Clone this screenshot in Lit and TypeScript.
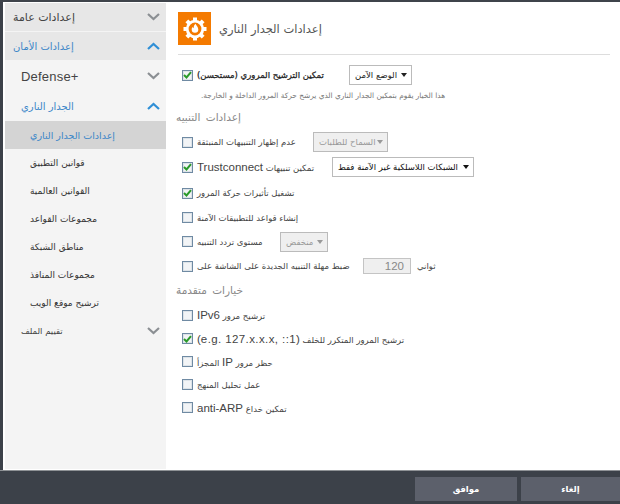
import { LitElement, html, svg, css } from "lit";
import { customElement } from "lit/decorators.js";

const check = (on: boolean) => html`<span class="cb">${on ? html`<svg width="9" height="8" viewBox="0 0 9 8"><path d="M1 4l2.5 2.5L8 1.2" fill="none" stroke="#2a9a2a" stroke-width="2"/></svg>` : ""}</span>`;
const chev = (up: boolean) => html`<svg class="chev" width="13" height="8" viewBox="0 0 13 8"><path d=${up ? "M1 7l5.500-5 5.500 5" : "M1 1l5.500 5 5.500-5"} fill="none" stroke=${up ? "#2f8fd6" : "#8b8f93"} stroke-width="2.2"/></svg>`;
const teeth = [0, 45, 90, 135, 180, 225, 270, 315];

@customElement("app-root")
export class AppRoot extends LitElement {
  static styles = css`
    :host { display: block; width: 620px; height: 504px; font-family: "DejaVu Sans", sans-serif; font-size: 10px; color: #444; background: #fff; overflow: hidden; }
    .frame { height: 504px; display: flex; flex-direction: column; }
    .top { height: 2px; background: #3f444b; flex: none; }
    .main { flex: 1; display: flex; min-height: 0; border-bottom: 1px solid #8f9296; }
    .lb { width: 3px; background: #3c4149; flex: none; margin-right: 2px; }
    .side { width: 161px; background: #f4f4f4; flex: none; display: flex; flex-direction: column; margin: 1px 0; }
    .n { height: 28px; flex: none; display: flex; align-items: center; justify-content: space-between; padding-right: 6px; box-sizing: border-box; }
    .l1 { background: #e7e7e7; padding-left: 8px; margin-bottom: 1px; }
    .l2 { padding-left: 16px; height: 30px; }
    .l3 { padding-left: 25px; font-size: 9px; color: #333; }
    .big { font-size: 11px; color: #444; }
    .small { font-size: 8.5px; height: 28px; }
    .blue { color: #3b86c8; }
    .sel { background: #d4d4d4; font-size: 9.5px; color: #3b86c8; }
    .en { font-family: "Liberation Sans", sans-serif; font-size: 13px; letter-spacing: .2px; }
    .body { flex: 1; padding: 10px 10px 0 10px; min-width: 0; }
    .head { display: flex; align-items: center; gap: 8px; height: 43px; border-bottom: 1px solid #ddd; margin-left: 2px; padding-bottom: 9px; box-sizing: border-box; }
    .logo { width: 33px; height: 33px; background: #f47a00; display: flex; align-items: center; justify-content: center; flex: none; }
    .title { font-size: 11.5px; color: #555; }
    .row { display: flex; align-items: center; height: 24px; padding-left: 6px; font-size: 8.5px; white-space: nowrap; color: #444; }
    .h26 { height: 26px; } .h23 { height: 23px; } .h25 { height: 25px; }
    .row .cb { margin-right: 4px; }
    .cb { width: 9px; height: 9px; border: 1px solid #6f8aa3; background: #f2f4f6; box-shadow: inset 0 0 0 1px #dde3e8; display: inline-flex; align-items: center; justify-content: center; flex: none; }
    .t { display: inline-block; flex: none; }
    .lat { font-family: "Liberation Sans", sans-serif; font-size: 11.5px; }
    .spaced { letter-spacing: .4px; }
    .w152 { width: 152px; } .w116 { width: 116px; } .w135 { width: 135px; } .w83 { width: 83px; } .w166 { width: 166px; }
    .sb { height: 20px; border: 1px solid #bbb; display: inline-flex; align-items: center; justify-content: space-between; padding: 0 4px 0 5px; box-sizing: border-box; background: #fff; color: #222; font-size: 8.5px; font-weight: normal; flex: none; overflow: hidden; }
    .sb.dis { background: #efefef; color: #999; }
    .sb.dark { color: #111; }
    .s63 { width: 63px; } .s75 { width: 75px; } .s142 { width: 142px; } .s48 { width: 48px; }
    .tri { width: 0; height: 0; border: 3px solid transparent; border-top: 4px solid currentColor; border-bottom: 0; flex: none; }
    .first { height: 22px; margin-top: 9px; }
    .strong { font-size: 8.5px; color: #222; -webkit-text-stroke: .25px #222; }
    .note { font-size: 7.4px; color: #777; padding: 3px 0 0 25px; height: 13px; line-height: 13px; white-space: nowrap; text-align: left; }
    .sec { font-size: 10.5px; color: #888; height: 23px; line-height: 20px; padding-top: 5px; word-spacing: 2px; text-align: left; }
    .sec.g { padding-top: 0; height: 25px; line-height: 24px; }
    .num { width: 48px; height: 16px; border: 1px solid #c4c4c4; background: #efefef; color: #888; font-family: "Liberation Sans", sans-serif; font-size: 11.5px; text-align: right; padding-right: 6px; line-height: 14px; box-sizing: border-box; flex: none; margin-right: 6px; }
    .foot { height: 33px; flex: none; background: #3c4149; box-sizing: border-box; display: flex; justify-content: flex-end; gap: 4px; padding: 6px 0 3px; }
    .btn { width: 102px; background: #5c606b; color: #fff; font-size: 8.5px; font-weight: bold; display: flex; align-items: center; justify-content: center; }
    .btn.last { width: 99px; }
  `;

  render() {
    const sub = ["قوانين التطبيق", "القوانين العالمية", "مجموعات القواعد", "مناطق الشبكة", "مجموعات المنافذ", "ترشيح موقع الويب"];
    return html`<div class="frame">
      <div class="top"></div>
      <div class="main">
        <div class="lb"></div>
        <div class="side">
          <div class="n l1 big"><span dir="rtl">إعدادات عامة</span>${chev(false)}</div>
          <div class="n l1 blue"><span dir="rtl">إعدادات الأمان</span>${chev(true)}</div>
          <div class="n l2"><span class="en">Defense+</span>${chev(false)}</div>
          <div class="n l2 blue"><span dir="rtl">الجدار الناري</span>${chev(true)}</div>
          <div class="n l3 sel"><span dir="rtl">إعدادات الجدار الناري</span></div>
          ${sub.map((s) => html`<div class="n l3"><span dir="rtl">${s}</span></div>`)}
          <div class="n l2 small"><span dir="rtl">تقييم الملف</span>${chev(false)}</div>
        </div>
        <div class="body">
          <div class="head">
            <div class="logo">
              <svg width="24" height="24" viewBox="0 0 24 24">
                ${teeth.map((a) => svg`<rect x="10" y="0.500" width="4" height="5" fill="#fff" transform="rotate(${a} 12 12)"/>`)}
                <circle cx="12" cy="12" r="7.8" fill="#f47a00" stroke="#fff" stroke-width="2.8"/>
                <path d="M12.500 6.800c.6 2 2.800 3 2.800 5.600a3.300 3.300 0 0 1-6.600 0c0-1 .5-1.800 1-2.300.2.7.5 1 1 1.100-.2-1.700.5-3.200 1.800-4.400z" fill="#fff"/>
              </svg>
            </div>
            <span class="title" dir="rtl">إعدادات الجدار الناري</span>
          </div>
          <div class="row first">${check(true)}<span class="t w152"><span class="strong" dir="rtl">تمكين الترشيح المروري (مستحسن)</span></span>
            <span class="sb s63"><span dir="rtl">الوضع الآمن</span><span class="tri"></span></span></div>
          <div class="note" dir="rtl">هذا الخيار يقوم بتمكين الجدار الناري الذي يرشح حركة المرور الداخلة و الخارجة.</div>
          <div class="sec" dir="rtl">إعدادات التنبيه</div>
          <div class="row">${check(false)}<span class="t w116"><span dir="rtl">عدم إظهار التنبيهات المنبثقة</span></span>
            <span class="sb dis s75"><span dir="rtl">السماح للطلبات</span><span class="tri"></span></span></div>
          <div class="row h26">${check(true)}<span class="t w135"><span dir="rtl">تمكين تنبيهات <span class="lat">Trustconnect</span></span></span>
            <span class="sb dark s142"><span dir="rtl">الشبكات اللاسلكية غير الآمنة فقط</span><span class="tri"></span></span></div>
          <div class="row h26">${check(true)}<span dir="rtl">تشغيل تأثيرات حركة المرور</span></div>
          <div class="row h23">${check(false)}<span dir="rtl">إنشاء قواعد للتطبيقات الآمنة</span></div>
          <div class="row h25">${check(false)}<span class="t w83"><span dir="rtl">مستوى تردد التنبيه</span></span>
            <span class="sb dis s48"><span dir="rtl">منخفض</span><span class="tri"></span></span></div>
          <div class="row">${check(false)}<span class="t w166"><span dir="rtl">ضبط مهلة التنبيه الجديدة على الشاشة على</span></span>
            <span class="num">120</span><span dir="rtl">ثواني</span></div>
          <div class="sec g" dir="rtl">خيارات متقدمة</div>
          <div class="row">${check(false)}<span dir="rtl">ترشيح مرور <span class="lat">IPv6</span></span></div>
          <div class="row h23">${check(true)}<span dir="rtl">ترشيح المرور المتكرر للخلف <span class="lat spaced">(e.g. 127.x.x.x, ::1)</span></span></div>
          <div class="row h23">${check(false)}<span dir="rtl">حظر مرور <span class="lat">IP</span> المجزأ</span></div>
          <div class="row h23">${check(false)}<span dir="rtl">عمل تحليل المنهج</span></div>
          <div class="row h23">${check(false)}<span dir="rtl">تمكين خداع <span class="lat">anti-ARP</span></span></div>
        </div>
      </div>
      <div class="foot">
        <div class="btn">موافق</div>
        <div class="btn last">إلغاء</div>
      </div>
    </div>`;
  }
}
